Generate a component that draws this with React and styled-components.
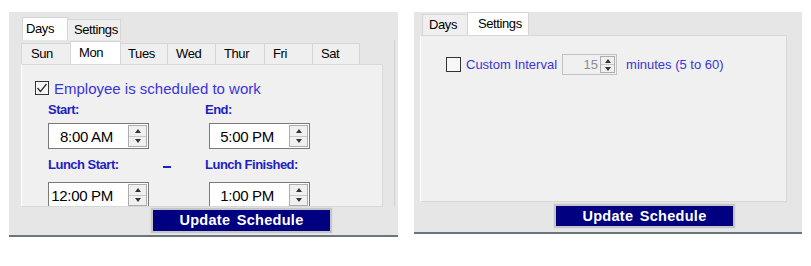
import React from "react";
import styled, { createGlobalStyle } from "styled-components";

const GlobalStyle = createGlobalStyle`
  html, body {
    margin: 0;
    padding: 0;
    background: #ffffff;
    font-family: "Liberation Sans", Arial, sans-serif;
  }
`;

const Screen = styled.div`
  display: flex;
  align-items: flex-start;
  gap: 16px;
  padding: 12px 0 0 9px;
`;

const Panel = styled.div`
  box-sizing: border-box;
  width: ${p => p.$w}px;
  height: ${p => p.$h}px;
  padding: ${p => p.$pad};
  background: #e6e6e6;
  border-bottom: 2px solid #6b7580;
  display: flex;
  flex-direction: column;
  align-items: flex-start;
`;

const TabStrip = styled.div`
  display: flex;
  align-items: flex-end;
  height: 23px;
  margin-left: ${p => p.$indent || 0}px;
`;

const Tab = styled.div`
  box-sizing: border-box;
  width: ${p => p.$w}px;
  height: ${p => (p.$active ? 23 : 21)}px;
  padding: ${p => (p.$active ? 3 : 2)}px 0 0 ${p => p.$px || 8}px;
  background: ${p => (p.$active ? "#ffffff" : "#efefef")};
  border: 1px solid #d6d6d6;
  border-bottom: none;
  margin-left: -1px;
  font-size: 13px;
  line-height: 16px;
  letter-spacing: -0.4px;
  color: #000;
  position: relative;
  z-index: ${p => (p.$active ? 1 : 0)};
`;

const OuterPage = styled.div`
  box-sizing: border-box;
  width: 374px;
  padding-top: 1px;
  border-right: 1px solid #d4d4d4;
`;

const TabPage = styled.div`
  box-sizing: border-box;
  width: ${p => p.$w}px;
  height: ${p => p.$h}px;
  padding: ${p => p.$pad};
  background: #f0f0f0;
  border: 1px solid #d8d8d8;
  border-left: 1px solid #ffffff;
  overflow: hidden;
`;

const CheckRow = styled.div`
  display: flex;
  align-items: center;
  gap: ${p => p.$gap}px;
  height: ${p => p.$h}px;
  margin-left: ${p => p.$indent}px;
`;

const Box = styled.div`
  box-sizing: border-box;
  width: ${p => p.$size}px;
  height: ${p => p.$size}px;
  border: 1px solid #333333;
  background: #f7f7f7;
  display: flex;
  align-items: center;
  justify-content: center;
  flex: none;
`;

const Caption = styled.span`
  font-size: ${p => p.$size}px;
  color: #3b34d6;
  white-space: nowrap;
`;

const TimeGrid = styled.div`
  display: grid;
  grid-template-columns: 112px 45px 130px;
  grid-template-rows: 21px 26px 33px 26px;
  margin: 6px 0 0 26px;
`;

const Label = styled.div`
  align-self: start;
  margin-top: ${p => p.$top || 0}px;
  margin-left: ${p => p.$left || 0}px;
  font-size: 13px;
  line-height: 16px;
  font-weight: bold;
  letter-spacing: -0.5px;
  color: #1f1fc4;
  white-space: nowrap;
`;

const Dash = styled.div`
  margin: 8px 0 0 3px;
  width: 8px;
  height: 2px;
  margin-top: 17px;
  background: #1f1fc4;
`;

const SpinBox = styled.div`
  box-sizing: border-box;
  width: ${p => p.$w}px;
  height: ${p => p.$h}px;
  margin-left: ${p => p.$left || 0}px;
  border: 1px solid ${p => (p.$disabled ? "#c2c2c2" : "#7a7a7a")};
  background: ${p => (p.$disabled ? "#f0f0f0" : "#ffffff")};
  display: flex;
  align-items: center;
  padding-right: 1px;
`;

const SpinValue = styled.span`
  flex: 1;
  text-align: right;
  padding-right: ${p => p.$gap}px;
  font-size: ${p => p.$size}px;
  letter-spacing: ${p => (p.$size > 14 ? "-0.3px" : "0")};
  color: ${p => (p.$disabled ? "#8c8c8c" : "#000000")};
`;

const Spinner = styled.div`
  box-sizing: border-box;
  width: ${p => p.$w}px;
  height: ${p => p.$h}px;
  border: 1px solid #adadad;
  background: #f0f0f0;
  display: flex;
  flex-direction: column;
`;

const SpinHalf = styled.div`
  flex: 1;
  display: flex;
  align-items: center;
  justify-content: center;
  border-top: ${p => (p.$down ? "1px solid #c8c8c8" : "none")};
`;

const Arrow = styled.div`
  width: 0;
  height: 0;
  border-left: 3.5px solid transparent;
  border-right: 3.5px solid transparent;
  ${p =>
    p.$down
      ? "border-top: 4px solid #333;"
      : "border-bottom: 4px solid #333;"}
`;

const UpdateButton = styled.button`
  box-sizing: border-box;
  width: 181px;
  height: ${p => p.$h}px;
  margin: ${p => p.$top}px 0 0 ${p => p.$left}px;
  padding: 0;
  border: 2px solid #c6c6c6;
  outline: 1px solid #e0e0e0;
  background: #000080;
  color: #ffffff;
  font-family: "Liberation Sans", Arial, sans-serif;
  font-size: 14.5px;
  font-weight: bold;
  letter-spacing: 0.3px;
  word-spacing: 2px;
  line-height: 1;
`;

const SettingsRow = styled.div`
  display: flex;
  align-items: center;
`;

const Check = () => (
  <svg width="12" height="12" viewBox="0 0 12 12">
    <polyline points="1.5,6 4.5,9.5 10.5,2" fill="none" stroke="#333" strokeWidth="1.4" />
  </svg>
);

function TimeInput({ value, left }) {
  return (
    <SpinBox $w={101} $h={26} $left={left}>
      <SpinValue $size={15} $gap={15}>{value}</SpinValue>
      <Spinner $w={19} $h={22}>
        <SpinHalf><Arrow /></SpinHalf>
        <SpinHalf $down><Arrow $down /></SpinHalf>
      </Spinner>
    </SpinBox>
  );
}

const days = [
  { name: "Sun", w: 50, px: 9 },
  { name: "Mon", w: 51, active: true },
  { name: "Tues", w: 48, px: 7 },
  { name: "Wed", w: 49 },
  { name: "Thur", w: 50 },
  { name: "Fri", w: 49 },
  { name: "Sat", w: 48 }
];

function App() {
  return (
    <>
      <GlobalStyle />
      <Screen>
        <Panel $w={389} $h={225} $pad="5px 0 0 12px">
          <TabStrip $indent={2}>
            <Tab $active $w={46} $px={3}>Days</Tab>
            <Tab $w={54} $px={6}>Settings</Tab>
          </TabStrip>
          <OuterPage>
            <TabStrip $indent={1}>
              {days.map(d => (
                <Tab key={d.name} $w={d.w} $active={d.active} $px={d.px}>
                  {d.name}
                </Tab>
              ))}
            </TabStrip>
            <TabPage $w={362} $h={143} $pad="15px 0 0 0">
              <CheckRow $gap={5} $h={16} $indent={13}>
                <Box $size={14}><Check /></Box>
                <Caption $size={15}>Employee is scheduled to work</Caption>
              </CheckRow>
              <TimeGrid>
                <Label>Start:</Label>
                <div />
                <Label>End:</Label>
                <TimeInput value="8:00 AM" />
                <div />
                <TimeInput value="5:00 PM" left={4} />
                <Label $top={8}>Lunch Start:</Label>
                <Dash />
                <Label $top={8}>Lunch Finished:</Label>
                <TimeInput value="12:00 PM" />
                <div />
                <TimeInput value="1:00 PM" left={4} />
              </TimeGrid>
            </TabPage>
          </OuterPage>
          <UpdateButton $h={25} $top={1} $left={130}>Update Schedule</UpdateButton>
        </Panel>

        <Panel $w={388} $h={222} $pad="0 0 0 6px">
          <TabStrip $indent={3}>
            <Tab $w={46} $px={6}>Days</Tab>
            <Tab $active $w={62} $px={10}>Settings</Tab>
          </TabStrip>
          <TabPage $w={367} $h={167} $pad="18px 0 0 25px">
            <SettingsRow>
              <Box $size={15} />
              <Caption $size={13} style={{ marginLeft: 5 }}>Custom Interval</Caption>
              <SpinBox $w={55} $h={21} $left={5} $disabled>
                <SpinValue $size={13} $gap={2} $disabled>15</SpinValue>
                <Spinner $w={15} $h={17}>
                  <SpinHalf><Arrow /></SpinHalf>
                  <SpinHalf $down><Arrow $down /></SpinHalf>
                </Spinner>
              </SpinBox>
              <Caption $size={13} style={{ marginLeft: 9 }}>minutes (5 to 60)</Caption>
            </SettingsRow>
          </TabPage>
          <UpdateButton $h={24} $top={2} $left={134}>Update Schedule</UpdateButton>
        </Panel>
      </Screen>
    </>
  );
}

export default App;
